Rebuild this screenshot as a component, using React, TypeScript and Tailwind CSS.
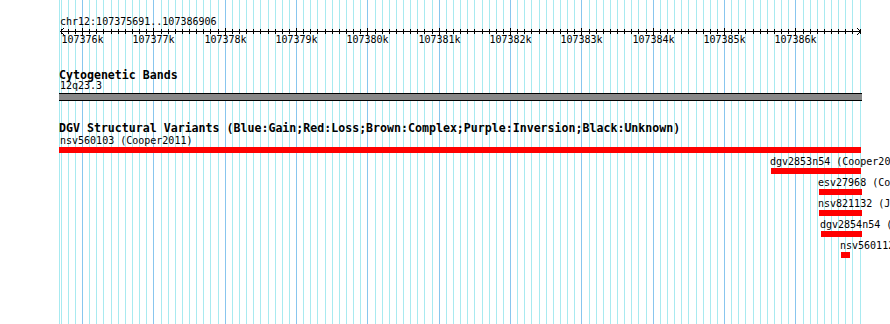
import React from "react";

const START = 107375691;
const END = 107386906;
const X0 = 60;
const W = 800;
const toX = (bp: number) => Math.round(X0 + ((bp - START) * W) / (END - START));

const minor: number[] = [];
for (let bp = 107375700; bp <= 107386900; bp += 100) minor.push(bp);
const majors = minor.filter((bp) => bp % 1000 === 0);

const features = [
  { name: "nsv560103 (Cooper2011)", left: 59, width: 802, labelLeft: 60 },
  { name: "dgv2853n54 (Cooper2011)", left: 771, width: 90, labelLeft: 770 },
  { name: "esv27968 (Conrad2009)", left: 819, width: 43, labelLeft: 818 },
  { name: "nsv821132 (Jakobsson2008)", left: 819, width: 43, labelLeft: 818 },
  { name: "dgv2854n54 (Cooper2011)", left: 821, width: 41, labelLeft: 820 },
  { name: "nsv560112 (Cooper2011)", left: 841, width: 9, labelLeft: 840 },
];

function Grid() {
  return (
    <svg
      className="absolute left-0 top-0"
      width={890}
      height={324}
      shapeRendering="crispEdges"
    >
      <rect x={59} y={0} width={1} height={324} fill="#a8eaf0" />
      {minor.map((bp) => (
        <rect
          key={bp}
          x={toX(bp)}
          y={0}
          width={1}
          height={324}
          fill={bp % 1000 === 0 ? "#88c6ee" : "#a8eaf0"}
        />
      ))}
    </svg>
  );
}

function Ruler() {
  const arrow: React.ReactNode[] = [];
  for (let i = 1; i <= 3; i++) {
    arrow.push(<rect key={"la" + i} x={60 + i} y={4 - i} width={1} height={1} fill="#000" />);
    arrow.push(<rect key={"lb" + i} x={60 + i} y={4 + i} width={1} height={1} fill="#000" />);
    arrow.push(<rect key={"ra" + i} x={860 - i} y={4 - i} width={1} height={1} fill="#000" />);
    arrow.push(<rect key={"rb" + i} x={860 - i} y={4 + i} width={1} height={1} fill="#000" />);
  }
  return (
    <div className="relative h-[20px] w-[890px]">
      <svg className="absolute left-0 top-0" width={890} height={20} shapeRendering="crispEdges">
        <rect x={60} y={4} width={801} height={1} fill="#000" />
        {minor.map((bp) =>
          bp % 1000 === 0 ? (
            <rect key={bp} x={toX(bp)} y={1} width={1} height={8} fill="#000" />
          ) : (
            <rect key={bp} x={toX(bp)} y={2} width={1} height={5} fill="#000" />
          )
        )}
        {arrow}
      </svg>
      {majors.map((bp) => (
        <span
          key={bp}
          className="absolute top-[7px] -translate-x-1/2 whitespace-nowrap text-[10px] leading-[12px]"
          style={{ left: toX(bp) + 0.5 }}
        >
          {bp / 1000}k
        </span>
      ))}
    </div>
  );
}

export default function App() {
  return (
    <div
      className="relative h-[324px] w-[890px] overflow-hidden bg-white text-black"
      style={{ fontFamily: '"DejaVu Sans Mono", "Liberation Mono", monospace' }}
    >
      <Grid />
      <div className="relative flex flex-col">
        <div className="h-[16px]" />
        <div className="h-[11px] whitespace-nowrap pl-[60px] text-[10px] leading-[12px]">
          chr12:107375691..107386906
        </div>
        <Ruler />
        <div className="h-[23px]" />
        <div className="h-[10px] whitespace-nowrap pl-[59px] text-[11.6px] font-bold leading-[10px]">
          Cytogenetic Bands
        </div>
        <div className="h-[12px] whitespace-nowrap pl-[60px] text-[10px] leading-[12px]">
          12q23.3
        </div>
        <div className="h-[1px]" />
        <div className="ml-[59px] h-[8px] w-[803px] border-y border-black bg-[#888888]" />
        <div className="h-[22px]" />
        <div className="h-[10px] whitespace-nowrap pl-[59px] text-[11.6px] font-bold leading-[10px]">
          DGV Structural Variants (Blue:Gain;Red:Loss;Brown:Complex;Purple:Inversion;Black:Unknown)
        </div>
        <div className="h-[2px]" />
        {features.map((f) => (
          <div key={f.name} className="mb-[3px] flex flex-col">
            <div
              className="h-[12px] whitespace-nowrap text-[10px] leading-[12px]"
              style={{ marginLeft: f.labelLeft }}
            >
              {f.name}
            </div>
            <div className="h-[6px] bg-[#ff0000]" style={{ marginLeft: f.left, width: f.width }} />
          </div>
        ))}
      </div>
    </div>
  );
}
